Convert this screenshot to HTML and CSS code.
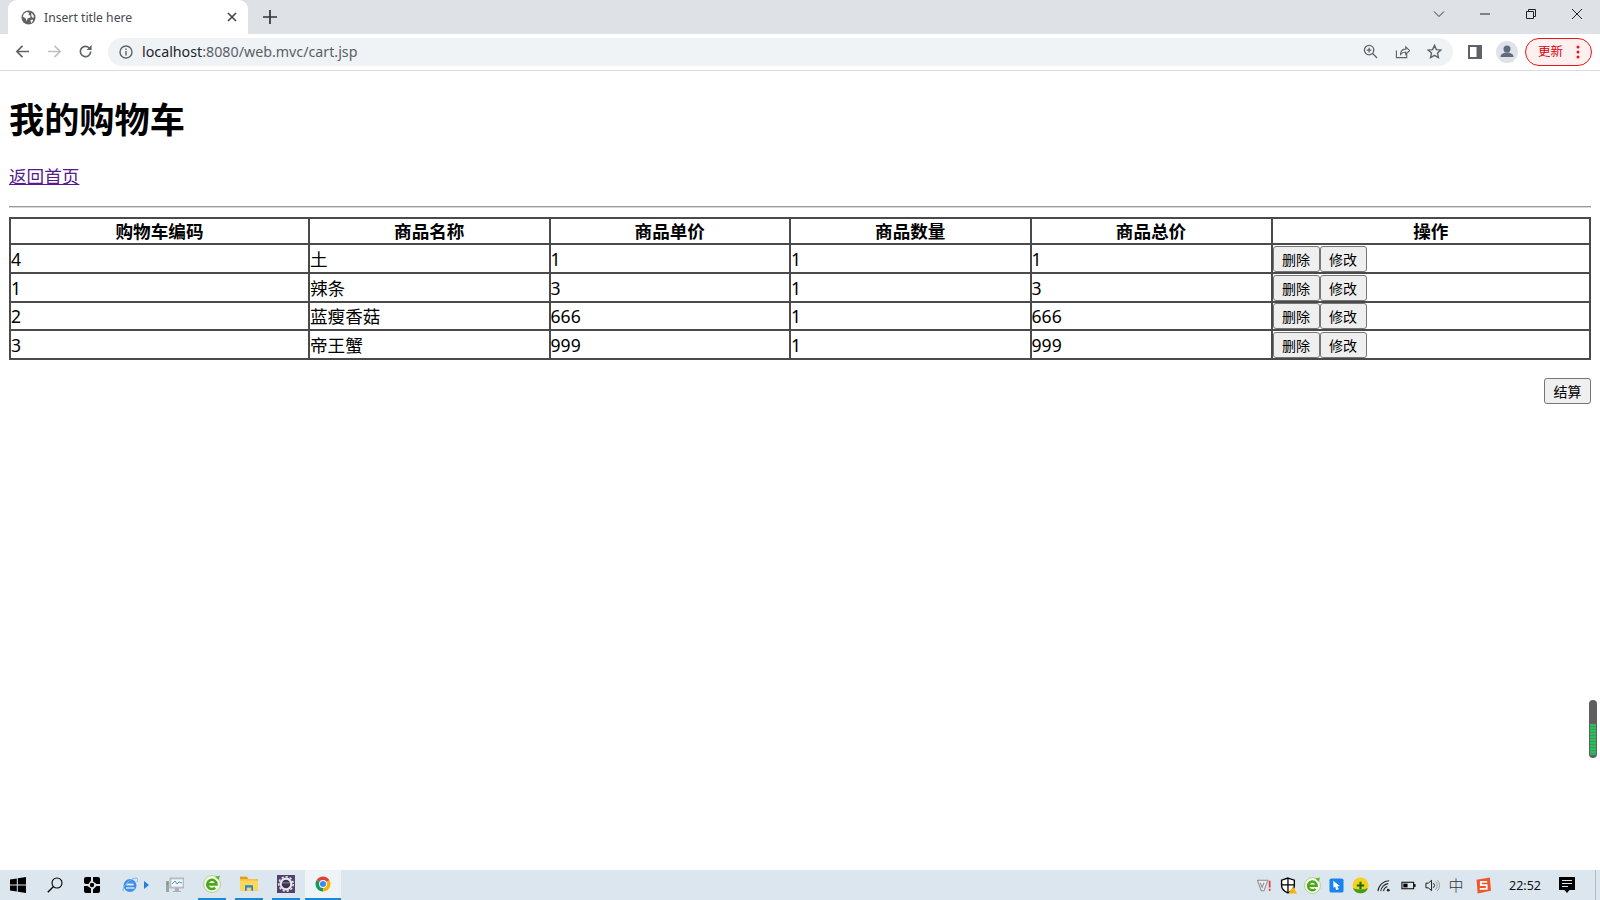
FILE: index.html
```html
<!DOCTYPE html>
<html lang="zh-CN">
<head>
<meta charset="utf-8">
<title>Insert title here</title>
<link rel="stylesheet" href="styles.css">
</head>
<body>
<div class="window">
  <header class="tabstrip">
    <div class="tab">
      <svg class="tab-globe" viewBox="0 0 16 16"><circle cx="8" cy="8" r="7.500" fill="#5f6368"/><path d="M3 4l3-2 3 1-1 2 2 1 0 2-3 1-1 3-1-3-3-2z M11 3l2 2 1 3-2 0-1-2z M10 11l2-1 1 1-2 3z" fill="#fff"/></svg>
      <span class="tab-title">Insert title here</span>
      <svg class="tab-close" viewBox="0 0 10 10"><path d="M1 1l8 8M9 1l-8 8" stroke="#444" stroke-width="1.600" fill="none"/></svg>
    </div>
    <svg class="new-tab" viewBox="0 0 14 14"><path d="M7 0v14M0 7h14" stroke="#333" stroke-width="1.700" fill="none"/></svg>
    <div class="win-controls">
      <span class="win-btn"><svg viewBox="0 0 12 12" class="ic12"><path d="M1 3.500l5 5 5-5" stroke="#333" fill="none"/></svg></span>
      <span class="win-btn"><svg viewBox="0 0 12 12" class="ic12"><path d="M1 6h10" stroke="#222" fill="none"/></svg></span>
      <span class="win-btn"><svg viewBox="0 0 12 12" class="ic12"><path d="M1.500 3.500h7v7h-7zM3.500 3.500v-2h7v7h-2" stroke="#222" fill="none"/></svg></span>
      <span class="win-btn"><svg viewBox="0 0 12 12" class="ic12"><path d="M1 1l10 10M11 1l-10 10" stroke="#222" fill="none"/></svg></span>
    </div>
  </header>

  <nav class="toolbar">
    <svg class="nav-ic" viewBox="0 0 16 16"><path d="M15 8H2M8 2L2 8l6 6" stroke="#5f6368" stroke-width="1.800" fill="none"/></svg>
    <svg class="nav-ic" viewBox="0 0 16 16"><path d="M1 8h13M8 2l6 6-6 6" stroke="#bdc1c6" stroke-width="1.800" fill="none"/></svg>
    <svg class="nav-ic reload" viewBox="0 0 16 16"><path d="M13.500 8a5.500 5.500 0 1 1-1.700-4" stroke="#5f6368" stroke-width="1.800" fill="none"/><path d="M14.500 1v5.500H9z" fill="#5f6368"/></svg>
    <div class="omnibox">
      <svg class="info-ic" viewBox="0 0 14 14"><circle cx="7" cy="7" r="6" stroke="#5f6368" stroke-width="1.400" fill="none"/><path d="M7 6v4.500M7 3.500v1.400" stroke="#5f6368" stroke-width="1.400"/></svg>
      <span class="url"><span class="url-host">localhost</span>:8080/web.mvc/cart.jsp</span>
      <span class="omni-actions">
        <svg class="omni-ic" viewBox="0 0 16 16"><circle cx="6.500" cy="6.500" r="5" stroke="#5f6368" stroke-width="1.400" fill="none"/><path d="M10.200 10.200L15 15M4 6.500h5M6.500 4v5" stroke="#5f6368" stroke-width="1.400"/></svg>
        <svg class="omni-ic" viewBox="0 0 16 16"><path d="M1.500 7v7.500h11V11M6 11c0-4 3-5.500 5.500-5.500V3l4 4-4 4V8.500C9 8.500 7.500 9 6 11z" stroke="#5f6368" stroke-width="1.200" fill="none"/></svg>
        <svg class="omni-ic" viewBox="0 0 16 16"><path d="M8 1.500l2 4.500 4.800.5-3.600 3.200 1 4.800L8 12.100l-4.200 2.400 1-4.800L1.200 6.500 6 6z" stroke="#5f6368" stroke-width="1.500" fill="none"/></svg>
      </span>
    </div>
    <svg class="panel-ic" viewBox="0 0 14 14"><path d="M0 0h14v14H0z" fill="#5f6368"/><path d="M2 2h6.500v10H2z" fill="#fff"/></svg>
    <span class="avatar"><svg viewBox="0 0 22 22" class="avatar-ic"><circle cx="11" cy="8" r="3.500" fill="#5f6b7d"/><path d="M4.500 16c0-3 3-4.500 6.500-4.500s6.500 1.500 6.500 4.500z" fill="#5f6b7d"/></svg></span>
    <span class="update"><span class="update-label">更新</span><svg class="update-dots" viewBox="0 0 4 14"><circle cx="2" cy="2" r="1.500"/><circle cx="2" cy="7" r="1.500"/><circle cx="2" cy="12" r="1.500"/></svg></span>
  </nav>

  <main class="page">
    <h1 class="title">我的购物车</h1>
    <p class="back"><a href="#" class="back-link">返回首页</a></p>
    <hr class="rule">
    <table class="cart">
      <colgroup><col class="c1"><col class="c2"><col class="c3"><col class="c4"><col class="c5"><col class="c6"></colgroup>
      <thead>
        <tr><th>购物车编码</th><th>商品名称</th><th>商品单价</th><th>商品数量</th><th>商品总价</th><th>操作</th></tr>
      </thead>
      <tbody>
        <tr><td>4</td><td>土</td><td>1</td><td>1</td><td>1</td><td class="ops"><button class="btn">删除</button><button class="btn">修改</button></td></tr>
        <tr><td>1</td><td>辣条</td><td>3</td><td>1</td><td>3</td><td class="ops"><button class="btn">删除</button><button class="btn">修改</button></td></tr>
        <tr class="row-short"><td>2</td><td>蓝瘦香菇</td><td>666</td><td>1</td><td>666</td><td class="ops"><button class="btn">删除</button><button class="btn">修改</button></td></tr>
        <tr><td>3</td><td>帝王蟹</td><td>999</td><td>1</td><td>999</td><td class="ops"><button class="btn">删除</button><button class="btn">修改</button></td></tr>
      </tbody>
    </table>
    <div class="checkout"><button class="btn">结算</button></div>
    <div class="float-meter"><div class="float-meter-fill"></div></div>
  </main>

  <footer class="taskbar">
    <div class="task-left">
      <span class="slot"><svg class="ic18" viewBox="0 0 16 16"><path d="M0 2.500l6.800-1v6H0zM7.800 1.300L16 0v7.500H7.800zM0 8.500h6.800v6l-6.800-1zM7.800 8.500H16V16l-8.200-1.300z" fill="#000"/></svg></span>
      <span class="slot"><svg class="ic18" viewBox="0 0 16 16"><circle cx="10" cy="6" r="5" stroke="#000" stroke-width="1.100" fill="none"/><path d="M6.500 9.500L.8 15.200" stroke="#000" stroke-width="1.300"/></svg></span>
      <span class="slot"><svg class="ic18" viewBox="0 0 16 16"><path d="M2 0h5v3.500L4.500 7H2a2 2 0 0 1-2-2V2a2 2 0 0 1 2-2zM9 0h5a2 2 0 0 1 2 2v5h-3.500L9 4.500zM0 9h3.500L7 11.500V16H2a2 2 0 0 1-2-2zM12.500 9H16v5a2 2 0 0 1-2 2H9v-3.500z" fill="#000"/><circle cx="8" cy="8" r="2.200" fill="#000"/></svg></span>
      <span class="slot slot-ie"><svg class="ic18" viewBox="0 0 16 16"><circle cx="8" cy="8.500" r="6.500" fill="#3d8fe8"/><path d="M4.500 7.500h7" stroke="#e7f1fb" stroke-width="1.800"/><path d="M4 11h8.500" stroke="#e7f1fb" stroke-width="1.300"/><path d="M1 14C0 9 9 1 14 1c2 0 2 2 1 4" stroke="#7db6ef" stroke-width="1" fill="none"/></svg><svg class="ie-arrow" viewBox="0 0 5 8"><path d="M0 0l5 4-5 4z" fill="#1e7fe0"/></svg></span>
      <span class="slot slot-mon"><svg class="ic18 mon" viewBox="0 0 18 16"><path d="M4 1h14v10H4z" fill="#c9ced2" stroke="#999" stroke-width=".6"/><path d="M5.500 2.500h11v7h-11z" fill="#f3f7fa"/><path d="M6 7l3-3 2 3 2-2 3 1" stroke="#3b8bd0" fill="none" stroke-width=".9"/><path d="M9 11h4v3h2v1H7v-1h2z" fill="#aab0b5"/><path d="M0 4h3v11H0z" fill="#9aa3a8"/><path d="M.8 5.500h1.400v2H.8z" fill="#4caf50"/></svg></span>
      <span class="slot slot-app run"><svg class="ic18 big" viewBox="0 0 16 16"><circle cx="8" cy="8" r="7.500" fill="#f6faee" stroke="#a8cf70" stroke-width=".8"/><path d="M3.800 8.300h8.200a4.100 4.100 0 1 0-1.200 3" stroke="#4ba81e" stroke-width="2.300" fill="none"/><path d="M10.500 1.500L15 .5l-1 4z" fill="#5cb82a"/></svg></span>
      <span class="slot slot-app run"><svg class="ic18 big" viewBox="0 0 16 16"><path d="M0 1.500h6l1.500 2H16V14H0z" fill="#f5c33b"/><path d="M0 1.500h6l1.500 2H0z" fill="#d9a21e"/><path d="M0 5h16v9H0z" fill="#fbd75b"/><path d="M4.500 9h7v5H10v-3H6v3H4.500z" fill="#1f84d8"/></svg></span>
      <span class="slot slot-app run"><svg class="ic18 big" viewBox="0 0 16 16"><path d="M0 0h16v16H0z" fill="#54406f"/><circle cx="8" cy="8" r="5.700" fill="#e8e8ea"/><circle cx="8" cy="8" r="6.400" fill="none" stroke="#e8e8ea" stroke-width="1.400" stroke-dasharray="2 1.700"/><circle cx="8" cy="8" r="3.800" fill="#3a3450"/><path d="M4.500 7h7" stroke="#8f86a5" stroke-width=".9"/></svg></span>
      <span class="slot-active run"><svg class="ic18 big" viewBox="0 0 24 24"><path d="M12 12L3.340 7A10 10 0 0 1 20.660 7z" fill="#db4437"/><path d="M12 12L20.660 7A10 10 0 0 1 12 22z" fill="#f4b400"/><path d="M12 12L12 22A10 10 0 0 1 3.340 7z" fill="#0f9d58"/><circle cx="12" cy="12" r="5.200" fill="#fff"/><circle cx="12" cy="12" r="4" fill="#4285f4"/></svg></span>
    </div>
    <div class="task-tray">
      <span class="tray"><svg class="ic16" viewBox="0 0 16 16"><path d="M.5 2.500h11l-4 11h-3z" fill="#e8edf1" stroke="#8d8d8d" stroke-width="1.100"/><path d="M3.500 5l2 5 2-5" stroke="#8d8d8d" fill="none" stroke-width="1.100"/><path d="M13.500 3v7M13.500 11.500v2" stroke="#e33" stroke-width="1.800"/></svg></span>
      <span class="tray"><svg class="ic16 t18" viewBox="0 0 16 16"><path d="M7.500 1l6 2v5c0 3-2.500 5.500-6 7-3.500-1.500-6-4-6-7V3z" fill="#fff" stroke="#000" stroke-width="1.300"/><path d="M7.500 1v14M1.500 7.500h12" stroke="#000" stroke-width="1.200"/><path d="M12 9l4 6.500H8z" fill="#f7b500"/></svg></span>
      <span class="tray"><svg class="ic16 t18" viewBox="0 0 16 16"><circle cx="8" cy="8" r="7.500" fill="#f6faee" stroke="#a8cf70" stroke-width=".8"/><path d="M3.800 8.300h8.200a4.100 4.100 0 1 0-1.200 3" stroke="#4ba81e" stroke-width="2.300" fill="none"/><path d="M10.500 1.500L15 .5l-1 4z" fill="#5cb82a"/></svg></span>
      <span class="tray"><svg class="ic16" viewBox="0 0 16 16"><rect x=".5" y=".5" width="15" height="15" rx="2" fill="#1a84ee"/><path d="M4.500 3l7 5.500-2.500.5 1.500 3-3 .8-.8-3.500-2 1z" fill="#fff"/></svg></span>
      <span class="tray"><svg class="ic16 t18" viewBox="0 0 16 16"><circle cx="8" cy="8" r="7.500" fill="#f3d21c"/><path d="M1 10.500a7.500 7.500 0 0 0 14 0A12 6 0 0 1 1 10.500z" fill="#3f9a28"/><path d="M8 4.500v7M4.500 8h7" stroke="#1d6b14" stroke-width="2"/></svg></span>
      <span class="tray"><svg class="ic16" viewBox="0 0 16 16"><path d="M1 14a12 12 0 0 1 12-11M4 14a9 9 0 0 1 8-8M7 14a6 6 0 0 1 4-5" stroke="#222" fill="none" stroke-width="1.100"/><circle cx="12" cy="13" r="1.500" fill="#222"/></svg></span>
      <span class="tray"><svg class="ic16" viewBox="0 0 16 16"><path d="M1 4.500h12.500v7H1z" stroke="#000" stroke-width="1.100" fill="none"/><path d="M14 6.500h1.500v3H14z" fill="#000"/><path d="M2.500 6h4.500v4H2.500z" fill="#000"/></svg></span>
      <span class="tray"><svg class="ic16" viewBox="0 0 16 16"><path d="M1 5.500h2.500L7 2.500v11L3.500 10.500H1z" stroke="#111" fill="none"/><path d="M9 5.500a3.500 3.500 0 0 1 0 5" stroke="#111" fill="none"/><path d="M11 3.500a6 6 0 0 1 0 9M13 2a8.500 8.500 0 0 1 0 12" stroke="#999" fill="none"/></svg></span>
      <span class="tray tray-ime">中</span>
      <span class="tray tray-sogou"><svg class="ic16 t18" viewBox="0 0 16 16"><path d="M1.500 2.500L14 .5l1 12.500L2.500 15.500z" fill="#f0562a"/><path d="M11.500 4.500h-6v3.200h5.500v3.500H4.500" stroke="#fff" stroke-width="1.700" fill="none"/></svg></span>
      <span class="clock">22:52</span>
      <span class="notify"><svg class="ic18" viewBox="0 0 16 16"><path d="M0 0h16v13h-5.500L8 16l-2.500-3H0z" fill="#000"/><path d="M3 3.500h10M3 6.500h10M3 9.500h6" stroke="#dce6ef"/></svg></span>
      <span class="show-desktop"></span>
    </div>
  </footer>
</div>
</body>
</html>
```

FILE: styles.css
```css
* { box-sizing: border-box; }
html, body { margin: 0; height: 100%; }
body { font-family: "Noto Sans", "Noto Sans CJK SC", sans-serif; background: #fff; color: #000; overflow: hidden; }
svg { display: block; flex: none; }

.window { display: flex; flex-direction: column; width: 1600px; height: 900px; }

/* tab strip */
.tabstrip { display: flex; align-items: flex-end; height: 34px; padding-left: 8px; background: #dee1e6; flex: none; }
.tab { display: flex; align-items: center; width: 240px; height: 34px; padding: 0 11px 0 13px; background: #fff; border-radius: 9px 9px 0 0; }
.tab-globe { width: 15px; height: 15px; }
.tab-title { flex: 1; margin-left: 8px; padding-top: 1px; font-size: 12.200px; color: #45494e; line-height: 34px; }
.tab-close { width: 10px; height: 10px; }
.new-tab { width: 14px; height: 14px; margin: 0 0 10px 15px; }
.win-controls { display: flex; margin-left: auto; align-self: flex-start; }
.win-btn { display: flex; align-items: center; justify-content: center; width: 46px; height: 28px; }
.ic12 { width: 12px; height: 12px; }

/* toolbar */
.toolbar { display: flex; align-items: center; height: 37px; padding: 0 8px 1px 15px; background: #fff; border-bottom: 1px solid #dadce0; flex: none; }
.nav-ic { width: 15px; height: 15px; margin-right: 17px; }
.nav-ic.reload { margin-left: -1px; margin-right: 15px; }
.omnibox { display: flex; align-items: center; width: 1345px; height: 28px; padding: 0 11px; background: #eff3f5; border-radius: 14px; }
.info-ic { width: 14px; height: 14px; }
.url { margin-left: 9px; font-size: 14.250px; color: #5a6066; white-space: nowrap; }
.url-host { color: #1f2327; }
.omni-actions { display: flex; gap: 17px; margin-left: auto; }
.omni-ic { width: 15px; height: 15px; }
.panel-ic { width: 14px; height: 14px; margin-left: 15px; }
.avatar { display: flex; align-items: center; justify-content: center; width: 22px; height: 22px; margin-left: 14px; background: #dfe2e8; border-radius: 50%; }
.avatar-ic { width: 22px; height: 22px; }
.update { display: flex; align-items: center; width: 67px; height: 28px; margin-left: 7px; padding-left: 12px; background: #fff0f0; border: 1px solid #e8161b; border-radius: 14px; }
.update-label { padding-top: 2px; font-size: 12.500px; color: #d9000c; line-height: 1; }
.update-dots { width: 4px; height: 14px; margin-left: 13px; fill: #e8161b; }

/* page */
.page { position: relative; flex: 1; min-height: 0; padding: 0 9px; }
.title { margin: 27px 0 0; font-size: 35.200px; line-height: 42px; font-weight: 700; }
.back { margin: 24px 0 0; font-size: 17.600px; line-height: 24px; }
.back-link { color: #551a8b; text-decoration: underline; }
.rule { margin: 18px 0 9px; border: 0; border-top: 1px solid #9a9a9a; border-bottom: 1px solid #d8d8d8; height: 2px; }

.cart { width: 1580px; table-layout: fixed; border-collapse: collapse; font-size: 17.600px; }
.c1 { width: 299px; }
.c2, .c3, .c4 { width: 240.500px; }
.c5 { width: 241px; }
.c6 { width: 318.500px; }
.cart th, .cart td { padding: 0; border: 2px solid #4a4a4a; line-height: 24px; }
.cart th { height: 26px; text-align: center; font-weight: 700; }
.cart td { height: 29px; text-align: left; }
.cart .row-short td { height: 28px; }
.cart .ops { line-height: 0; }

.btn { width: 47px; height: 26px; padding: 0; vertical-align: middle; font: 14px/1 "Noto Sans CJK SC", "Noto Sans", sans-serif; color: #000; background: #efefef; border: 1px solid #767676; border-radius: 3px; }

.checkout { display: flex; justify-content: flex-end; margin-top: 18px; }

.float-meter { position: absolute; right: 3px; top: 629px; width: 8px; height: 58px; padding-top: 24px; background: #5f5f5f; border-radius: 4px; overflow: hidden; }
.float-meter-fill { height: 31px; margin: 0 1px; background: repeating-linear-gradient(#22c35a 0 2px, #4d8f62 2px 3px); }

/* taskbar */
.taskbar { display: flex; justify-content: space-between; height: 30px; background: #dce6ef; flex: none; }
.task-left { display: flex; }
.slot { display: flex; align-items: center; justify-content: center; width: 37px; height: 30px; }
.slot:first-child { width: 36px; }
.slot-ie { width: 51px; justify-content: flex-start; padding-left: 12px; gap: 6px; }
.ie-arrow { width: 5px; height: 8px; }
.slot-mon { width: 28px; }
.ic18.mon { width: 18px; height: 16px; }
.slot-app { width: 28px; margin-left: 9px; }
.slot-active { display: flex; align-items: center; justify-content: center; width: 36px; height: 30px; margin-left: 5px; background: #eef3f7; }
.run { border-bottom: 2px solid #1a8ad8; }
.ic18 { width: 16px; height: 16px; }
.ic18.big { width: 18px; height: 18px; }

.task-tray { display: flex; align-items: center; }
.tray { display: flex; align-items: center; justify-content: center; width: 24px; height: 30px; }
.tray-sogou { margin-left: 3px; }
.ic16 { width: 15px; height: 15px; }
.ic16.t18 { width: 17px; height: 17px; }
.tray-ime { font-size: 15px; font-weight: 300; color: #333; line-height: 1; }
.clock { width: 58px; margin-left: 1px; text-align: center; font-size: 12.500px; color: #111; }
.notify { display: flex; justify-content: center; width: 28px; margin-left: -1px; }
.show-desktop { width: 1px; height: 30px; margin-left: 14px; margin-right: 4px; background: #b5bcc3; }
```
